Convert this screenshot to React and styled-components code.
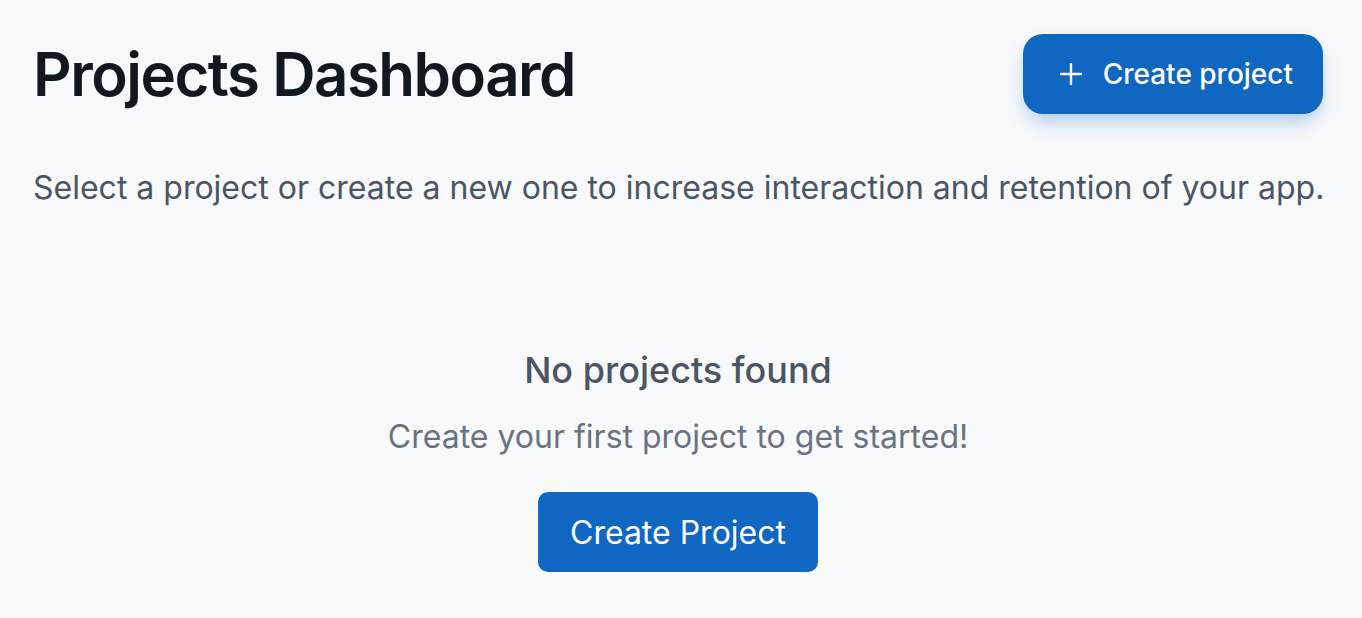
import React from 'react';
import styled, { createGlobalStyle } from 'styled-components';

const GlobalStyle = createGlobalStyle`
  * { box-sizing: border-box; }
  html, body {
    margin: 0;
    padding: 0;
    background: #f8f9fb;
    font-family: Inter, 'Noto Sans', sans-serif;
    -webkit-font-smoothing: antialiased;
  }
`;

const Page = styled.main`
  min-height: 618px;
  padding: 34px 39px 40px 33px;
`;

const Header = styled.header`
  display: flex;
  justify-content: space-between;
  align-items: center;
`;

const Title = styled.h1`
  margin: 0;
  font-size: 60px;
  line-height: 79px;
  font-weight: 600;
  letter-spacing: -1.5px;
  color: #111820;
`;

const Button = styled.button`
  display: inline-flex;
  align-items: center;
  justify-content: center;
  gap: 21px;
  height: 80px;
  padding: ${(p) => p.$pad || '0 32px'};
  border: none;
  border-radius: ${(p) => (p.$round ? 20 : 10)}px;
  background: #0f67c2;
  color: #fff;
  font-family: inherit;
  font-size: ${(p) => p.$size || 32}px;
  font-weight: ${(p) => p.$weight || 400};
  cursor: pointer;
  box-shadow: ${(p) =>
    p.$shadow ? '0 10px 20px -4px rgba(16, 104, 193, 0.35)' : 'none'};
`;

const Intro = styled.p`
  margin: 50px 0 0;
  font-size: 32px;
  line-height: 48px;
  color: #4b5563;
  white-space: nowrap;
`;

const Empty = styled.section`
  display: flex;
  flex-direction: column;
  align-items: center;
  margin-top: 134px;
`;

const EmptyTitle = styled.h2`
  margin: 0;
  font-size: 36px;
  line-height: 48px;
  font-weight: 500;
  color: #4b5563;
`;

const EmptyText = styled.p`
  margin: 19px 0 0;
  font-size: 32px;
  line-height: 48px;
  color: #6b7280;
`;

const EmptyAction = styled.div`
  margin-top: 31px;
`;

const PlusIcon = () => (
  <svg width="22" height="22" viewBox="0 0 22 22" fill="none">
    <path d="M11 1v20M1 11h20" stroke="#fff" strokeWidth="2.4" strokeLinecap="round" />
  </svg>
);

export default function App() {
  return (
    <>
      <GlobalStyle />
      <Page>
        <Header>
          <Title>Projects Dashboard</Title>
          <Button $round $shadow $pad="0 30px 0 37px" $size={28} $weight={500}>
            <PlusIcon />
            Create project
          </Button>
        </Header>
        <Intro>
          Select a project or create a new one to increase interaction and retention of your app.
        </Intro>
        <Empty>
          <EmptyTitle>No projects found</EmptyTitle>
          <EmptyText>Create your first project to get started!</EmptyText>
          <EmptyAction>
            <Button>Create Project</Button>
          </EmptyAction>
        </Empty>
      </Page>
    </>
  );
}
